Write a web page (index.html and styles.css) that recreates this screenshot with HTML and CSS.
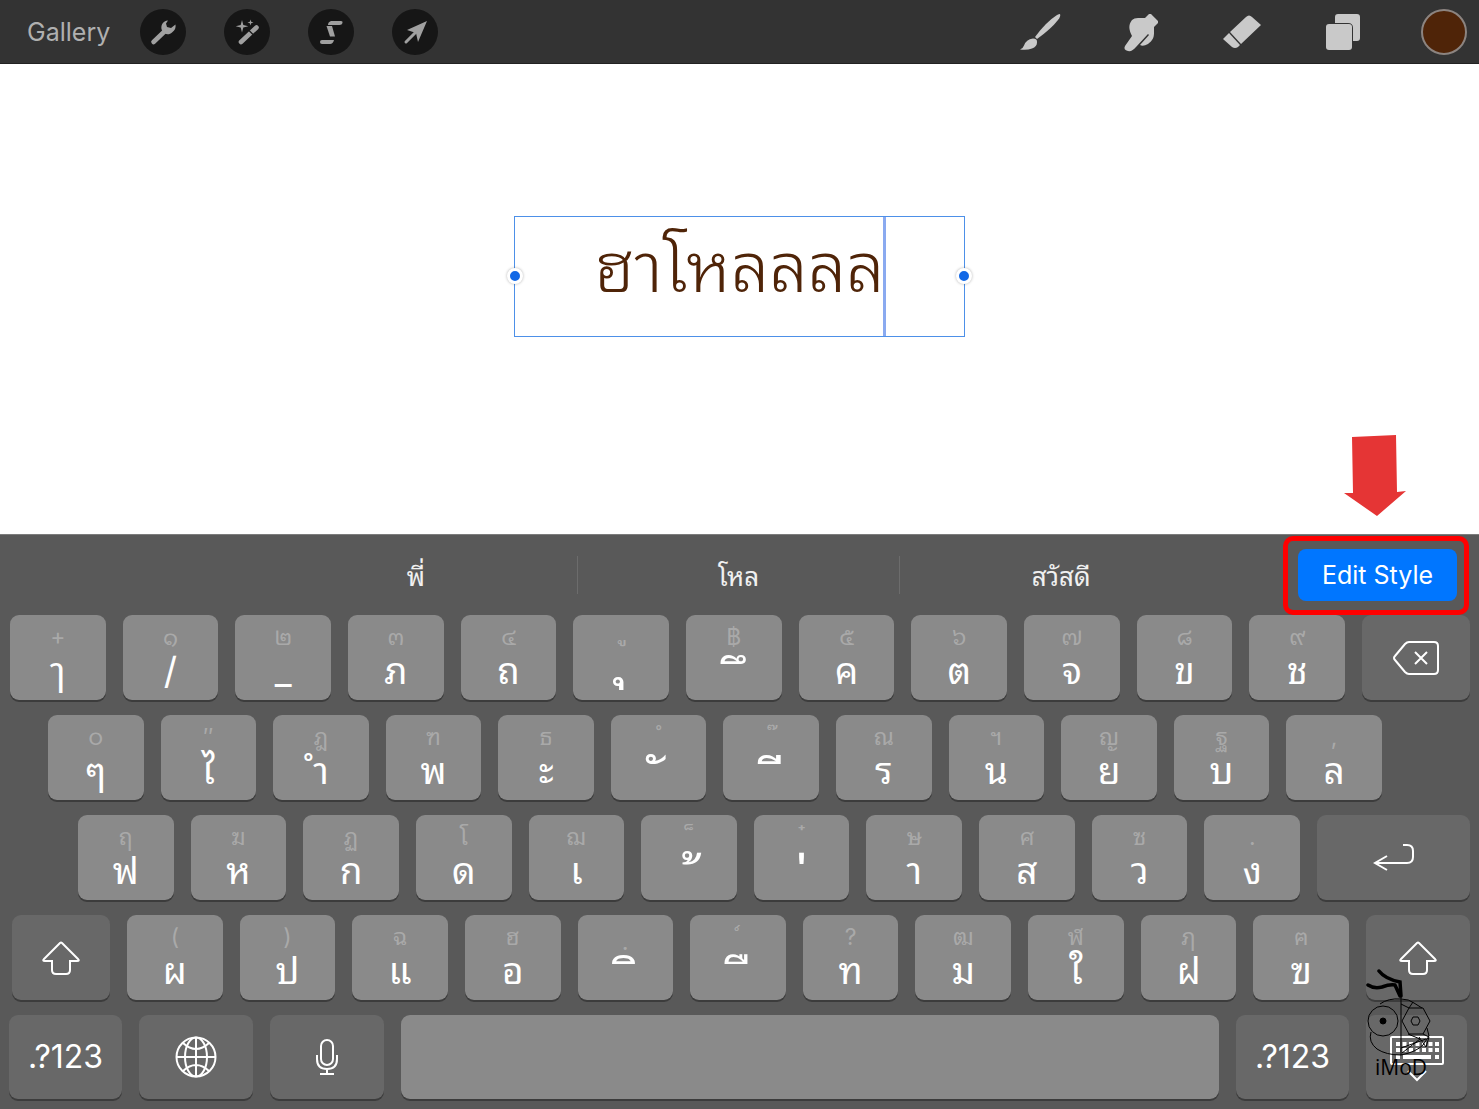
FILE: index.html
```html
<!DOCTYPE html>
<html lang="th">
<head>
    <meta charset="UTF-8">
    <meta name="viewport" content="width=device-width, initial-scale=1.0">
    <title>Add Text</title>
    <link rel="stylesheet" href="styles.css">
</head>
<body>
    <header class="toolbar">
        <button class="gallery">Gallery</button>
        <div class="actions">
            <button class="round" aria-label="Actions">
                <svg viewBox="0 0 46 46"><path d="M13.500 33 25 22" stroke="#a0a0a0" stroke-width="4.600" stroke-linecap="round"/><path d="M28 11.500c-5 .5-8 5-6 10 2 4 7 5 10 2 3-2 4-5 3.500-8l-4.500 3.500-4-1-1-3.500z" fill="#a0a0a0"/></svg>
            </button>
            <button class="round" aria-label="Adjustments">
                <svg viewBox="0 0 46 46"><path d="M17 33 32.500 18.500" stroke="#a0a0a0" stroke-width="4.600" stroke-linecap="round"/><path d="M25 21.500l4 4" stroke="#161616" stroke-width="1.200"/><path d="M18 11l1.300 5 5 1.300-5 1.300-1.300 5-1.300-5-5-1.300 5-1.300zM26.500 10.500l.7 2.300 2.300.7-2.300.7-.7 2.300-.7-2.300-2.300-.7 2.300-.7z" fill="#a0a0a0"/></svg>
            </button>
            <button class="round" aria-label="Selection">
                <svg viewBox="0 0 46 46" fill="#a0a0a0"><path d="M23 12h10q2 0 1.500 2t-3 2H20q0-3 3-4z"/><path d="M18.500 17h5.500l3 10.500h-5z"/><path d="M14 31h12q-1 4-4 4h-8q-2 0-2-2t2-2z"/></svg>
            </button>
            <button class="round" aria-label="Transform">
                <svg viewBox="0 0 46 46"><path d="M35 12 26 33l-2-9-9-3z" fill="#a0a0a0"/><path d="M14 33 26 21" stroke="#a0a0a0" stroke-width="3" stroke-linecap="round"/></svg>
            </button>
        </div>
        <div class="tools">
            <button class="tool" aria-label="Brush">
                <svg viewBox="0 0 46 46" fill="#c9c9c9"><path d="M43 5q1 2-2 6-7 9-21 19l-2-2Q29 13 40 6q2-1 3-1z"/><path d="M16 29.500q4.500 0 4 4 0 4-5 6-5 2-12 1 3-1 4-4 2-6 9-7z"/></svg>
            </button>
            <button class="tool" aria-label="Smudge">
                <svg viewBox="0 0 46 46" fill="#c9c9c9"><path d="M14 11q2-2 6-2h7l4-4h2l7 7v2l-4 4v6c0 5-2 8-6 11q-5 3-8 1l9-10-1-1-12 13q-4 5-8 4-5-1-3-5l7-10c-3-6-4-11 0-16z"/></svg>
            </button>
            <button class="tool" aria-label="Erase">
                <svg viewBox="0 0 46 46" fill="#c9c9c9"><path d="M11 23 27 8q3-3 6 0l9 8-20 19z"/><path d="M10 24l11 12-2 2q-3 2-6 0l-9-8z"/></svg>
            </button>
            <button class="tool" aria-label="Layers">
                <svg viewBox="0 0 46 46" fill="#c9c9c9"><path d="M18 5h19q3 0 3 3v21q0 3-3 3h-4V19q0-5-5-5H15V8q0-3 3-3z"/><rect x="6" y="15" width="26" height="26" rx="3"/></svg>
            </button>
            <button class="color" aria-label="Color"></button>
        </div>
    </header>

    <main class="canvas">
        <div class="text-box">
            <input class="text-input" type="text" value="ฮาโหลลลล" aria-label="Text">
            <span class="caret"></span>
            <span class="handle left"></span>
            <span class="handle right"></span>
        </div>
        <svg class="arrow" viewBox="0 0 62 82"><path d="M8 2 52 0 53 57 62 56 33 81 0 58 9 58z" fill="#e53535"/></svg>
    </main>

    <section class="keyboard">
        <div class="suggestions">
            <button class="suggestion">พี่</button>
            <button class="suggestion">โหล</button>
            <button class="suggestion">สวัสดี</button>
            <div class="edit">
                <button class="edit-style">Edit Style</button>
                <span class="highlight"></span>
            </div>
        </div>

        <div class="row row-1">
            <button class="key"><small>+</small>ๅ</button>
            <button class="key"><small>๑</small>/</button>
            <button class="key"><small>๒</small>_</button>
            <button class="key"><small>๓</small>ภ</button>
            <button class="key"><small>๔</small>ถ</button>
            <button class="key low"><small>&nbsp;&nbsp;ู</small>&nbsp;ุ</button>
            <button class="key mark"><small>฿</small>&nbsp;&nbsp;ึ</button>
            <button class="key"><small>๕</small>ค</button>
            <button class="key"><small>๖</small>ต</button>
            <button class="key"><small>๗</small>จ</button>
            <button class="key"><small>๘</small>ข</button>
            <button class="key"><small>๙</small>ช</button>
            <button class="key dark backspace" aria-label="Delete">
                <svg width="46" height="34" viewBox="0 0 46 34"><path d="M16 1h25q4 0 4 4v24q0 4-4 4H16q-2 0-4-2L2 19q-2-2 0-4L12 3q2-2 4-2zM22 11l12 12M34 11 22 23"/></svg>
            </button>
        </div>
        <div class="row row-2">
            <button class="key"><small>๐</small>ๆ</button>
            <button class="key"><small>″</small>ไ</button>
            <button class="key"><small>ฎ</small>ำ</button>
            <button class="key"><small>ฑ</small>พ</button>
            <button class="key"><small>ธ</small>ะ</button>
            <button class="key mark"><small>&nbsp;ํ</small>&nbsp;ั</button>
            <button class="key mark"><small>&nbsp;&nbsp;๊</small>&nbsp;&nbsp;ี</button>
            <button class="key"><small>ณ</small>ร</button>
            <button class="key"><small>ฯ</small>น</button>
            <button class="key"><small>ญ</small>ย</button>
            <button class="key"><small>ฐ</small>บ</button>
            <button class="key"><small>,</small>ล</button>
        </div>
        <div class="row row-3">
            <button class="key"><small>ฤ</small>ฟ</button>
            <button class="key"><small>ฆ</small>ห</button>
            <button class="key"><small>ฏ</small>ก</button>
            <button class="key"><small>โ</small>ด</button>
            <button class="key"><small>ฌ</small>เ</button>
            <button class="key mark"><small>&nbsp;&nbsp;็</small>&nbsp;&nbsp;้</button>
            <button class="key mark"><small>&nbsp;๋</small>&nbsp;่</button>
            <button class="key"><small>ษ</small>า</button>
            <button class="key"><small>ศ</small>ส</button>
            <button class="key"><small>ซ</small>ว</button>
            <button class="key"><small>.</small>ง</button>
            <button class="key dark return" aria-label="Return">
                <svg width="40" height="28" viewBox="0 0 40 28"><path d="M29 1h4q6 0 6 6v6q0 6-6 6H1M13 12 1 19l12 7"/></svg>
            </button>
        </div>
        <div class="row row-4">
            <button class="key dark shift" aria-label="Shift">
                <svg width="38" height="34" viewBox="0 0 38 34"><path d="M18 2q1-1 2 0l16 16q2 2-1 2h-7v9q0 4-4 4H14q-4 0-4-4v-9H3q-3 0-1-2z"/></svg>
            </button>
            <button class="key"><small>(</small>ผ</button>
            <button class="key"><small>)</small>ป</button>
            <button class="key"><small>ฉ</small>แ</button>
            <button class="key"><small>ฮ</small>อ</button>
            <button class="key mark"><small>&nbsp;ฺ</small>&nbsp;&nbsp;ิ</button>
            <button class="key mark"><small>&nbsp;์</small>&nbsp;&nbsp;ื</button>
            <button class="key"><small>?</small>ท</button>
            <button class="key"><small>ฒ</small>ม</button>
            <button class="key"><small>ฬ</small>ใ</button>
            <button class="key"><small>ฦ</small>ฝ</button>
            <button class="key"><small>ฅ</small>ฃ</button>
            <button class="key dark shift-right" aria-label="Shift">
                <svg width="38" height="34" viewBox="0 0 38 34"><path d="M18 2q1-1 2 0l16 16q2 2-1 2h-7v9q0 4-4 4H14q-4 0-4-4v-9H3q-3 0-1-2z"/></svg>
            </button>
        </div>
        <div class="row row-5">
            <button class="key dark symbols">.?123</button>
            <button class="key dark switch" aria-label="Next keyboard">
                <svg width="42" height="42" viewBox="0 0 42 42"><circle cx="21" cy="21" r="19.500"/><ellipse cx="21" cy="21" rx="11" ry="19.500"/><path d="M21 1v40M1 21h40M8 7q13 12 26 0M8 35q13-12 26 0"/></svg>
            </button>
            <button class="key dark switch" aria-label="Dictate">
                <svg width="22" height="36" viewBox="0 0 22 36"><rect x="5" y="1" width="12" height="25" rx="6"/><path d="M1 16v4q0 10 10 10t10-10v-4M11 30v5M4 35h14"/></svg>
            </button>
            <button class="key space" aria-label="Space"></button>
            <button class="key dark symbols">.?123</button>
            <button class="key dark hide" aria-label="Hide keyboard">
                <svg width="54" height="42" viewBox="0 0 54 42"><rect x="1" y="1" width="52" height="27" rx="1"/><path d="M6 8h43M6 14h43" stroke-width="4" stroke-dasharray="4 2.500"/><path d="M6 21h4M13 21h28M45 21h4" stroke-width="4"/><path d="M18 35l9 9 9-9"/></svg>
            </button>
        </div>

        <svg class="watermark" width="68" height="112" viewBox="0 0 68 112" fill="none" stroke="#000">
            <path d="M13 3q6 8 21 11l1 14M2 17q6 4 14 2 8-3 13-2l5 11" stroke-width="3.500" stroke-linecap="round"/>
            <path d="M35 28v59M14 36q8-6 21-5 8 0 13 4l8 5M5 64q-3 10 6 17 9 6 24 6 15-3 22-10l6-9-2-8"/>
            <circle cx="17" cy="53" r="15"/><circle cx="17" cy="53" r="3" fill="#000"/>
            <path d="M36 53l7-13h14l7 13-7 13H43zM45 53l2-4h5l2 4-2 4h-5zM35 80l25-9M57 66l6 3-3 10-7-10M43 40l4-6M35 36l8 4M42 66l12 5-18 14"/>
            <text x="9" y="107" fill="#000" stroke="none">iMoD</text>
        </svg>
    </section>
</body>
</html>
```
FILE: styles.css
```css
* {
    box-sizing: border-box;
}
body {
    margin: 0;
    min-height: 100vh;
    display: flex;
    flex-direction: column;
    font-family: Inter, "Noto Sans Thai Looped", "Noto Looped Thai", Loma, Waree, "Noto Sans", sans-serif;
    background-color: #fff;
}
button {
    border: 0;
    padding: 0;
    margin: 0;
    background: none;
    font-family: inherit;
    color: #fff;
}
svg {
    display: block;
}

/* top bar */
.toolbar {
    display: flex;
    align-items: center;
    height: 64px;
    padding: 0 12px 0 27px;
    background-color: #333;
    border-bottom: 1px solid #222;
}
.gallery {
    font-size: 25px;
    color: #b0b0b0;
}
.actions {
    display: flex;
    gap: 38px;
    margin-left: 30px;
}
.round {
    width: 46px;
    height: 46px;
    border-radius: 50%;
    background-color: #161616;
}
.tools {
    display: flex;
    gap: 55px;
    margin-left: auto;
}
.tool {
    width: 46px;
    height: 46px;
}
.color {
    width: 46px;
    height: 46px;
    border: 2px solid #8c8480;
    border-radius: 50%;
    background-color: #4f2408;
}

/* drawing area */
.canvas {
    flex: 1;
    position: relative;
    min-height: 300px;
    padding-top: 152px;
}
.text-box {
    position: relative;
    width: 451px;
    height: 121px;
    margin: 0 auto;
    border: 1px solid #4d90e8;
}
.text-input {
    display: block;
    width: 100%;
    height: 88px;
    border: 0;
    padding: 0;
    outline: none;
    background: none;
    text-align: center;
    font-family: "Noto Sans Thai Looped", "Noto Looped Thai", Loma, Waree, "Noto Sans", sans-serif;
    font-size: 69px;
    font-weight: 300;
    color: #4f2408;
}
.caret {
    position: absolute;
    top: 0;
    bottom: 0;
    left: 368px;
    width: 3px;
    background-color: #8aaaf0;
}
.handle {
    position: absolute;
    top: 51px;
    width: 16px;
    height: 16px;
    border: 3px solid #fff;
    border-radius: 50%;
    background-color: #1268e6;
    box-shadow: 0 0 3px rgba(0, 0, 0, 0.3);
}
.handle.left {
    left: -8px;
}
.handle.right {
    right: -8px;
}
.arrow {
    position: absolute;
    right: 73px;
    bottom: 17px;
    width: 62px;
    height: 82px;
}

/* keyboard */
.keyboard {
    position: relative;
    display: flex;
    flex-direction: column;
    gap: 15px;
    padding-bottom: 10px;
    background-color: #595959;
    border-top: 1px solid #7c7c7c;
}
.suggestions {
    display: flex;
    align-items: center;
    height: 80px;
    margin-bottom: -15px;
    padding: 0 22px 0 255px;
}
.suggestion {
    flex: 1;
    height: 38px;
    padding-top: 4px;
    font-size: 26px;
    line-height: 34px;
    color: #f0f0f0;
}
.suggestion + .suggestion {
    border-left: 1px solid #6c6c6c;
}
.edit {
    position: relative;
    width: 235px;
    padding-left: 76px;
}
.edit-style {
    display: block;
    width: 159px;
    height: 52px;
    border-radius: 8px;
    background-color: #0076ff;
    font-size: 25px;
}
.highlight {
    position: absolute;
    z-index: 1;
    top: -13px;
    right: -12px;
    width: 186px;
    height: 79px;
    border: 5px solid #fe0000;
    border-radius: 10px;
    pointer-events: none;
}
.row {
    display: flex;
    gap: 17px;
    height: 85px;
}
.row-1 {
    padding: 0 9px 0 10px;
}
.row-2 {
    padding: 0 97px 0 48px;
}
.row-3 {
    padding: 0 9px 0 78px;
}
.row-4 {
    padding: 0 9px 0 12px;
}
.row-5 {
    height: 84px;
    padding: 0 12px 0 9px;
}
.key {
    flex: 1 1 0;
    min-width: 0;
    display: flex;
    flex-direction: column;
    align-items: center;
    padding-top: 8px;
    border-radius: 9px;
    background-color: #8a8a8a;
    box-shadow: 0 2px 0 #3c3c3c;
    font-size: 37px;
    line-height: 40px;
}
.key small {
    height: 28px;
    font-size: 23px;
    line-height: 28px;
    color: #a9a9a9;
}
.key svg {
    fill: none;
    stroke: #fff;
    stroke-width: 2;
    overflow: visible;
}
/* vowels and tone marks that stand without a consonant */
.mark {
    font-size: 52px;
    line-height: 58px;
}
.low {
    font-size: 52px;
    line-height: 8px;
}
.low small {
    line-height: 16px;
}
.dark {
    flex: none;
    justify-content: center;
    padding-top: 0;
    background-color: #686868;
}
.backspace {
    width: 108px;
}
.return {
    width: 153px;
}
.shift {
    width: 98px;
}
.shift-right {
    width: 104px;
}
.symbols {
    width: 113px;
    font-size: 32px;
}
.switch {
    width: 114px;
}
.hide {
    width: 101px;
}

/* logo over the bottom right corner */
.watermark {
    position: absolute;
    right: 45px;
    bottom: 29px;
    pointer-events: none;
}
.watermark text {
    font-family: "Open Sans", sans-serif;
    font-size: 21px;
}
```
